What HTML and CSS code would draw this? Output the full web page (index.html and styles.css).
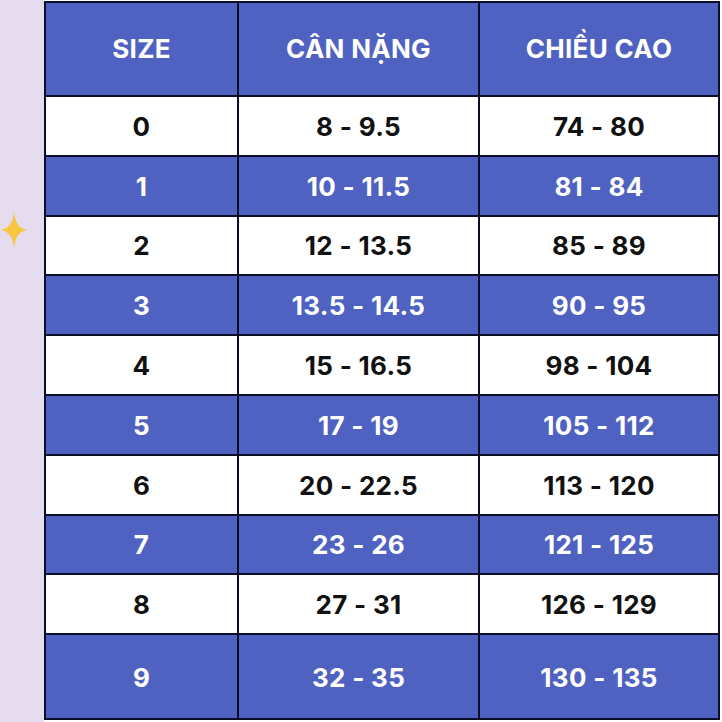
FILE: index.html
```html
<!DOCTYPE html>
<html lang="vi">
<head>
<meta charset="utf-8">
<link rel="stylesheet" href="styles.css">
<title>Bảng size</title>
</head>
<body>
<div class="page">
  <aside class="strip">
    <svg class="star" viewBox="0 0 30 40" width="30" height="40" aria-hidden="true">
      <path d="M15 2 C16.5 13 19 17.5 28 20 C19 22.5 16.5 27 15 38 C13.5 27 11 22.5 2 20 C11 17.5 13.5 13 15 2 Z" fill="#f8c640"/>
    </svg>
  </aside>
  <div class="table">
    <div class="cell head">SIZE</div><div class="cell head">CÂN NẶNG</div><div class="cell head">CHIỀU CAO</div>
    <div class="cell">0</div><div class="cell">8 - 9.5</div><div class="cell">74 - 80</div>
    <div class="cell blue">1</div><div class="cell blue">10 - 11.5</div><div class="cell blue">81 - 84</div>
    <div class="cell">2</div><div class="cell">12 - 13.5</div><div class="cell">85 - 89</div>
    <div class="cell blue">3</div><div class="cell blue">13.5 - 14.5</div><div class="cell blue">90 - 95</div>
    <div class="cell">4</div><div class="cell">15 - 16.5</div><div class="cell">98 - 104</div>
    <div class="cell blue">5</div><div class="cell blue">17 - 19</div><div class="cell blue">105 - 112</div>
    <div class="cell">6</div><div class="cell">20 - 22.5</div><div class="cell">113 - 120</div>
    <div class="cell blue">7</div><div class="cell blue">23 - 26</div><div class="cell blue">121 - 125</div>
    <div class="cell">8</div><div class="cell">27 - 31</div><div class="cell">126 - 129</div>
    <div class="cell blue">9</div><div class="cell blue">32 - 35</div><div class="cell blue">130 - 135</div>
  </div>
</div>
</body>
</html>
```
FILE: styles.css
```css
html, body {
  margin: 0;
  padding: 0;
  background: #ffffff;
}
.page {
  display: flex;
  width: 722px;
  height: 722px;
  overflow: hidden;
}
.strip {
  width: 44px;
  flex: none;
  background: #e6dcef;
  display: flex;
  flex-direction: column;
  align-items: flex-start;
}
.star {
  display: block;
  margin-top: 210px;
  margin-left: -1px;
}
.table {
  margin-top: 1px;
  width: 676px;
  height: 719px;
  box-sizing: border-box;
  flex: none;
  display: grid;
  grid-template-columns: 191px 239px 238px;
  grid-template-rows: 92px repeat(9, 57.8px) 83px;
  gap: 2px;
  padding: 2px;
  background: #0c0d26;
  font-family: Inter, "Open Sans", "Liberation Sans", sans-serif;
  font-weight: 700;
  font-size: 26px;
  letter-spacing: 0.3px;
}
.cell {
  display: flex;
  align-items: center;
  justify-content: center;
  background: #ffffff;
  color: #111111;
  padding-top: 1px;
}
.cell.head {
  padding-top: 0;
  padding-bottom: 1px;
}
.cell.head, .cell.blue {
  background: #4f62c1;
  color: #ffffff;
}
```
